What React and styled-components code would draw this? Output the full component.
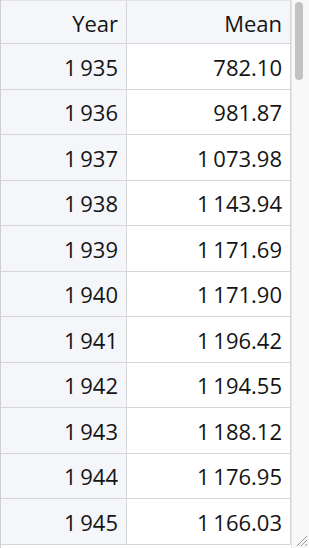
import React from 'react';
import styled, { createGlobalStyle } from 'styled-components';

const GlobalStyle = createGlobalStyle`
  html, body {
    margin: 0;
    padding: 0;
    background: #fff;
  }
  body {
    font-family: "Open Sans", "Liberation Sans", sans-serif;
  }
`;

const FrameStyled = styled.div`
  display: flex;
  position: relative;
  width: 309px;
  height: 548px;
  overflow: hidden;
  box-sizing: border-box;
  border-left: 1px solid #cfcfcf;
`;

const TableStyled = styled.div`
  flex: 1;
  display: flex;
  flex-direction: column;
  overflow: hidden;
`;

const RowStyled = styled.div`
  display: grid;
  grid-template-columns: 126px 1fr;
  flex: none;
  height: ${(props) => (props.header ? '44px' : '45.5px')};
  box-sizing: border-box;
  border-bottom: 1px solid #d6d6d8;
  border-top: ${(props) => (props.header ? '1px solid #e4e4e6' : 'none')};
`;

const CellStyled = styled.div`
  display: flex;
  align-items: center;
  justify-content: flex-end;
  padding-right: 8px;
  padding-top: 1px;
  background: ${(props) => (props.shaded ? '#f5f6fa' : '#ffffff')};
  border-right: 1px solid #d6d6d8;
  font-size: 22px;
  color: #141414;
`;

const TrackStyled = styled.div`
  width: 18px;
  flex: none;
  box-sizing: border-box;
  border-left: 1px solid #e6e6e6;
  background: #f8f8f8;
  padding: 2px 0 0 3px;
`;

const ThumbStyled = styled.div`
  width: 8px;
  height: 78px;
  border-radius: 4px;
  background: #c2c2c2;
`;

const GripStyled = styled.svg`
  position: absolute;
  right: 1px;
  bottom: 1px;
`;

const rows = [
  [1935, '782.10'],
  [1936, '981.87'],
  [1937, '1\u2009073.98'],
  [1938, '1\u2009143.94'],
  [1939, '1\u2009171.69'],
  [1940, '1\u2009171.90'],
  [1941, '1\u2009196.42'],
  [1942, '1\u2009194.55'],
  [1943, '1\u2009188.12'],
  [1944, '1\u2009176.95'],
  [1945, '1\u2009166.03'],
];

const formatYear = (year) => `${String(year)[0]}\u2009${String(year).slice(1)}`;

export default function App() {
  return (
    <>
      <GlobalStyle />
      <FrameStyled>
        <TableStyled>
          <RowStyled header>
            <CellStyled shaded>Year</CellStyled>
            <CellStyled shaded>Mean</CellStyled>
          </RowStyled>
          {rows.map(([year, mean]) => (
            <RowStyled key={year}>
              <CellStyled shaded>{formatYear(year)}</CellStyled>
              <CellStyled>{mean}</CellStyled>
            </RowStyled>
          ))}
        </TableStyled>
        <TrackStyled>
          <ThumbStyled />
        </TrackStyled>
        <GripStyled width="14" height="14" viewBox="0 0 14 14">
          <path d="M13 3 L3 13 M13 7 L7 13 M13 11 L11 13" stroke="#9a9a9a" strokeWidth="1" fill="none" />
        </GripStyled>
      </FrameStyled>
    </>
  );
}
